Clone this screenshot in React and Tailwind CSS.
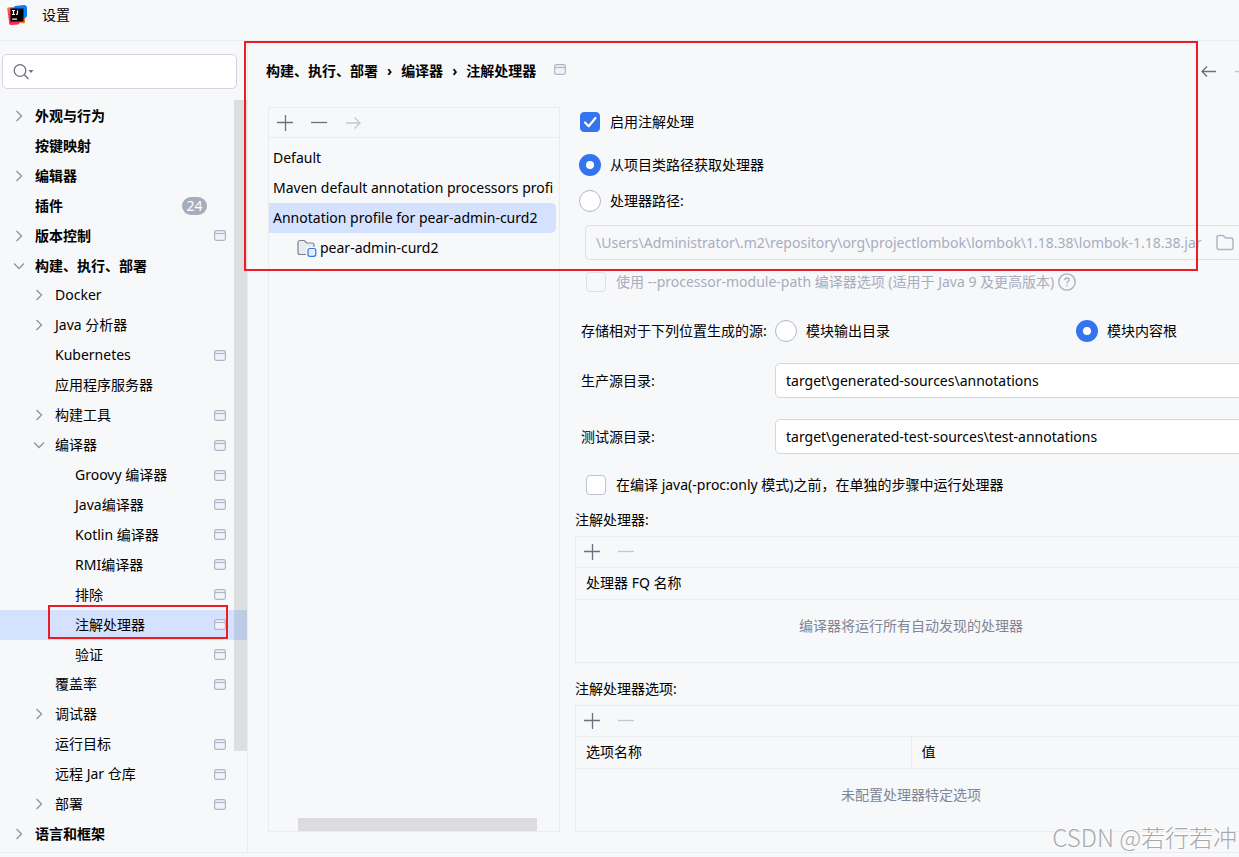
import React, { useState } from "react";

const TREE = [
  { label: "外观与行为", level: 0, arrow: "right" },
  { label: "按键映射", level: 0 },
  { label: "编辑器", level: 0, arrow: "right" },
  { label: "插件", level: 0, badge: 24 },
  { label: "版本控制", level: 0, arrow: "right", project: true },
  { label: "构建、执行、部署", level: 0, arrow: "down" },
  { label: "Docker", level: 1, arrow: "right" },
  { label: "Java 分析器", level: 1, arrow: "right" },
  { label: "Kubernetes", level: 1, project: true },
  { label: "应用程序服务器", level: 1 },
  { label: "构建工具", level: 1, arrow: "right", project: true },
  { label: "编译器", level: 1, arrow: "down", project: true },
  { label: "Groovy 编译器", level: 2, project: true },
  { label: "Java编译器", level: 2, project: true },
  { label: "Kotlin 编译器", level: 2, project: true },
  { label: "RMI编译器", level: 2, project: true },
  { label: "排除", level: 2, project: true },
  { label: "注解处理器", level: 2, project: true },
  { label: "验证", level: 2, project: true },
  { label: "覆盖率", level: 1, project: true },
  { label: "调试器", level: 1, arrow: "right" },
  { label: "运行目标", level: 1, project: true },
  { label: "远程 Jar 仓库", level: 1, project: true },
  { label: "部署", level: 1, arrow: "right", project: true },
  { label: "语言和框架", level: 0, arrow: "right" },
];

const INDENT = ["pl-3", "pl-8", "pl-13"];

const PROFILES = ["Default", "Maven default annotation processors profi", "Annotation profile for pear-admin-curd2"];

function Logo() {
  return (
    <svg width="20" height="20" viewBox="0 0 20 20" aria-hidden="true">
      <defs>
        <linearGradient id="warm" x1="0" y1="0" x2="0.4" y2="1">
          <stop offset="0" stopColor="#ff8a1f" />
          <stop offset="0.5" stopColor="#fb3a5c" />
          <stop offset="1" stopColor="#fe2857" />
        </linearGradient>
      </defs>
      <path d="M1 2.500 6 2v16.500l-2.300.500c-.8 0-1.400-.5-1.500-1.300L.2 4C.1 3.200.4 2.500 1 2.500Z" fill="url(#warm)" />
      <path d="M8 1 17 0c1.600 0 3 1.300 3 3v8l-3 4H6V3Z" fill="#087cfa" />
      <path d="M13 13h5v4c0 1-.6 1.600-1.500 1.500L11 17Z" fill="#fe7a1b" />
      <path d="M2 16h13l-4 3.500-7 .5c-1 0-1.600-.6-1.700-1.500Z" fill="#fe2857" />
      <path d="M3.500 3.500h13v13h-13z" fill="#000" />
      <path d="M5 5.500h3M6.500 5.500v4M5 9.500h3M10.500 5.500v3c0 .8-.5 1-1.500 1M5.200 14.200h4.800" stroke="#fff" strokeWidth="1.200" fill="none" />
    </svg>
  );
}

function Chevron({ dir }) {
  return (
    <svg width="14" height="14" viewBox="0 0 14 14" fill="none" stroke="#8d92a3" strokeWidth="1.300" aria-hidden="true">
      {dir === "down" ? <path d="m2 4.500 5 5 5-5" /> : <path d="m4.500 2 5 5-5 5" />}
    </svg>
  );
}

function ProjectIcon() {
  return (
    <svg width="12" height="11" viewBox="0 0 12 11" className="shrink-0" aria-hidden="true">
      <rect x="0.600" y="0.600" width="10.800" height="9.800" rx="1.800" fill="#f2f3f9" stroke="#b1b5c6" strokeWidth="1.200" />
      <path d="M1 3.500h10" stroke="#b1b5c6" strokeWidth="1.200" />
    </svg>
  );
}

function IconButton({ label, disabled, children }) {
  return (
    <button
      type="button"
      aria-label={label}
      disabled={disabled}
      className="flex size-[18px] items-center justify-center text-[#6c707e] disabled:text-[#c4c6cd]"
    >
      <svg width="18" height="18" viewBox="0 0 18 18" fill="none" stroke="currentColor" strokeWidth="1.300">
        {children}
      </svg>
    </button>
  );
}

function Plus({ label }) {
  return (
    <IconButton label={label}>
      <path d="M9.500 1v16M1 8.500h16" />
    </IconButton>
  );
}

function Minus({ label, disabled }) {
  return (
    <IconButton label={label} disabled={disabled}>
      <path d="M1 8.500h16" />
    </IconButton>
  );
}

function FolderPath() {
  return <path d="M1 3.500C1 2.400 1.900 1.500 3 1.500h3.500c.5 0 .9.200 1.200.500l2 2H15c1.100 0 2 .9 2 2v7.500c0 1.100-.9 2-2 2H3c-1.100 0-2-.9-2-2Z" />;
}

function Check({ label, className = "", ...props }) {
  return (
    <label className={`flex h-5 items-center gap-[10px] whitespace-nowrap has-disabled:text-[#a8adbd] ${className}`}>
      <span className="grid size-5 shrink-0">
        <input
          type="checkbox"
          className="peer col-start-1 row-start-1 size-5 appearance-none rounded-[4px] border border-[#bfc2d0] bg-white checked:border-[#3574f0] checked:bg-[#3574f0] disabled:border-[#dfe1e5] disabled:bg-transparent"
          {...props}
        />
        <svg viewBox="0 0 20 20" fill="none" stroke="#fff" strokeWidth="2.200" strokeLinecap="round" strokeLinejoin="round" className="pointer-events-none col-start-1 row-start-1 hidden size-5 peer-checked:block">
          <path d="m5 10.500 3.700 3.700L15.500 6" />
        </svg>
      </span>
      {label}
    </label>
  );
}

function Radio({ label, ...props }) {
  return (
    <label className="flex h-[22px] items-center gap-[9px] whitespace-nowrap">
      <input
        type="radio"
        className="size-[22px] shrink-0 appearance-none rounded-full border border-[#b4b8c8] bg-white checked:border-[7px] checked:border-[#3574f0]"
        {...props}
      />
      {label}
    </label>
  );
}

function Sidebar({ selected, onSelect }) {
  return (
    <aside className="relative flex w-[248px] shrink-0 flex-col border-r border-[#ebecf0] pb-[3px]">
      <div className="mt-[13px] mr-[10px] ml-[2px] flex h-[35px] shrink-0 items-center rounded-[5px] border border-[#d3d5de] bg-white px-[10px]">
        <svg width="22" height="18" viewBox="0 0 22 18" fill="none" stroke="#6c707e" strokeWidth="1.300" aria-hidden="true">
          <circle cx="7" cy="7.500" r="5.800" />
          <path d="m11.200 11.700 4.300 4.300" />
          <path d="M15.500 7h5l-2.500 3Z" fill="#6c707e" stroke="none" />
        </svg>
        <input type="search" aria-label="搜索设置" className="min-w-0 flex-1 bg-transparent outline-none" />
      </div>
      <ul className="mt-3 flex min-h-0 flex-1 flex-col">
        {TREE.map((item) => (
          <li key={item.label} className="flex flex-1">
            <button
              type="button"
              onClick={() => onSelect(item.label)}
              className={`flex w-full items-center pr-[21px] text-left ${INDENT[item.level]} ${item.level === 0 ? "font-bold" : ""} ${selected === item.label ? "bg-[#d4e2ff]" : ""}`}
            >
              <span className="w-[23px] shrink-0">{item.arrow && <Chevron dir={item.arrow} />}</span>
              <span className="flex-1 whitespace-nowrap">{item.label}</span>
              {item.badge && (
                <span className="mr-[19px] flex h-[18px] w-[25px] items-center justify-center rounded-full bg-[#a8adbd] font-normal text-white">
                  {item.badge}
                </span>
              )}
              {item.project && <ProjectIcon />}
            </button>
          </li>
        ))}
      </ul>
      <div className="absolute top-[59px] right-0 h-[651px] w-[13px] bg-black/10" />
    </aside>
  );
}

function Profiles() {
  const [active, setActive] = useState(PROFILES[2]);

  return (
    <section className="relative flex w-[292px] shrink-0 flex-col overflow-hidden border border-[#ebecf0]">
      <div className="flex h-[30px] shrink-0 items-center gap-4 border-b border-[#ebecf0] px-[7px]">
        <Plus label="添加配置文件" />
        <Minus label="移除配置文件" />
        <IconButton label="移至" disabled>
          <path d="M2 9h14M10.500 3.500 16 9l-5.500 5.500" />
        </IconButton>
      </div>
      <ul className="pt-[5px]">
        {PROFILES.map((name) => (
          <li key={name}>
            <button
              type="button"
              onClick={() => setActive(name)}
              className={`flex h-[30px] items-center rounded-r-[5px] pl-1 text-left whitespace-nowrap ${active === name ? "w-[287px] bg-[#d4e2ff]" : ""}`}
            >
              {name}
            </button>
          </li>
        ))}
        <li>
          <button type="button" className="flex h-[30px] items-center gap-[3px] pl-7">
            <svg width="20" height="18" viewBox="0 0 20 18" fill="#ebecf0" stroke="#7d818f" strokeWidth="1.200" aria-hidden="true">
              <FolderPath />
              <rect x="9" y="8" width="11" height="10" fill="#f7f8fa" stroke="none" />
              <rect x="11" y="9.500" width="7.800" height="7.800" rx="2" fill="#e7effd" stroke="#3574f0" />
            </svg>
            pear-admin-curd2
          </button>
        </li>
      </ul>
      <div className="absolute bottom-0 left-[29px] h-[13px] w-[239px] bg-[#dcdcde]" />
    </section>
  );
}

function GridPanel({ title, columns, empty }) {
  return (
    <section>
      <h2 className="leading-5">{title}</h2>
      <div className="mt-[6px] border border-[#ebecf0]">
        <div className="flex h-[31px] items-center gap-4 border-b border-[#ebecf0] px-[7px]">
          <Plus label="添加" />
          <Minus label="移除" disabled />
        </div>
        <table className="w-full table-fixed border-collapse">
          <thead>
            <tr className="h-[31px] border-b border-[#ebecf0]">
              {columns.map((name) => (
                <th key={name} scope="col" className="border-l border-[#ebecf0] px-[10px] text-left font-normal first:border-l-0">
                  {name}
                </th>
              ))}
            </tr>
          </thead>
          <tbody>
            <tr>
              <td colSpan={columns.length} className="h-[63px] pb-[10px] text-center text-[#818594]">
                {empty}
              </td>
            </tr>
          </tbody>
        </table>
      </div>
    </section>
  );
}

function ProcessorForm() {
  const [source, setSource] = useState("classpath");
  const [output, setOutput] = useState("content");

  return (
    <form className="-mr-2 min-w-0 flex-1 pt-[5px] pl-[15px]" onSubmit={(e) => e.preventDefault()}>
      <Check label="启用注解处理" defaultChecked className="ml-[5px]" />
      <div className="mt-[22px] ml-1 flex flex-col gap-[14px]">
        <Radio label="从项目类路径获取处理器" name="source" checked={source === "classpath"} onChange={() => setSource("classpath")} />
        <Radio label="处理器路径:" name="source" checked={source === "path"} onChange={() => setSource("path")} />
      </div>
      <div className="mt-[13px] ml-[10px] flex h-[35px] items-center rounded-l-[5px] border border-r-0 border-[#dfe1e5] pr-[13px] pl-[10px]">
        <input
          aria-label="处理器路径"
          disabled
          className="min-w-0 flex-1 text-[#a8adbd]"
          defaultValue="\Users\Administrator\.m2\repository\org\projectlombok\lombok\1.18.38\lombok-1.18.38.jar"
        />
        <button type="button" aria-label="浏览" className="ml-1">
          <svg width="18" height="17" viewBox="0 0 18 17" fill="none" stroke="#b1b5c6" strokeWidth="1.500">
            <FolderPath />
          </svg>
        </button>
      </div>
      <div className="mt-3 ml-[11px] flex items-center gap-1">
        <Check label="使用 --processor-module-path 编译器选项 (适用于 Java 9 及更高版本)" disabled />
        <button type="button" aria-label="帮助">
          <svg width="18" height="18" viewBox="0 0 18 18" fill="none" stroke="#a8adbd" strokeWidth="1.300">
            <circle cx="9" cy="9" r="8.200" />
            <path d="M6.800 7.200c0-1.300 1-2.200 2.200-2.200s2.200.8 2.200 2c0 1.500-2.200 1.700-2.200 3.400M9 11.800v1.400" />
          </svg>
        </button>
      </div>
      <fieldset className="mt-[28px] ml-[6px] flex items-center">
        <legend className="float-left w-[194px] whitespace-nowrap">存储相对于下列位置生成的源:</legend>
        <div className="grid flex-1 grid-cols-[301px_1fr]">
          <Radio label="模块输出目录" name="output" checked={output === "output"} onChange={() => setOutput("output")} />
          <Radio label="模块内容根" name="output" checked={output === "content"} onChange={() => setOutput("content")} />
        </div>
      </fieldset>
      <div className="mt-[21px] ml-[6px] grid grid-cols-[194px_1fr] items-center gap-y-[21px]">
        <label htmlFor="main-dir">生产源目录:</label>
        <input id="main-dir" className="h-[35px] min-w-0 rounded-l-[5px] border border-[#d3d5de] bg-white px-[10px]" defaultValue="target\generated-sources\annotations" />
        <label htmlFor="test-dir">测试源目录:</label>
        <input id="test-dir" className="h-[35px] min-w-0 rounded-l-[5px] border border-[#d3d5de] bg-white px-[10px]" defaultValue="target\generated-test-sources\test-annotations" />
      </div>
      <Check label="在编译 java(-proc:only 模式)之前，在单独的步骤中运行处理器" className="mt-[21px] ml-[11px]" />
      <div className="mt-[15px] flex flex-col gap-4">
        <GridPanel title="注解处理器:" columns={["处理器 FQ 名称"]} empty="编译器将运行所有自动发现的处理器" />
        <GridPanel title="注解处理器选项:" columns={["选项名称", "值"]} empty="未配置处理器特定选项" />
      </div>
    </form>
  );
}

export default function App() {
  const [selected, setSelected] = useState("注解处理器");

  return (
    <div className="relative flex h-screen flex-col overflow-hidden bg-[#f7f8fa] font-['Noto_Sans','Noto_Sans_CJK_SC',sans-serif] text-[14px] leading-5 text-black">
      <header className="flex h-[41px] shrink-0 items-start gap-[15px] border-b border-[#ebecf0] px-[7px] pt-[5px]">
        <Logo />
        <h1>设置</h1>
      </header>

      <div className="flex min-h-0 flex-1">
        <Sidebar selected={selected} onSelect={setSelected} />
        <main className="flex min-w-0 flex-1 flex-col">
          <div className="flex h-[60px] shrink-0 items-center pl-[18px]">
            <nav className="flex items-center gap-[9px] font-bold whitespace-nowrap">
              <a href="#build">构建、执行、部署</a>
              <span>›</span>
              <a href="#compiler">编译器</a>
              <span>›</span>
              <a href="#processors">注解处理器</a>
            </nav>
            <span className="ml-[18px] pb-1">
              <ProjectIcon />
            </span>
            <div className="-mr-[13px] ml-auto flex gap-4">
              <IconButton label="后退">
                <path d="M16 9.500H2M7 4.500l-5 5 5 5" />
              </IconButton>
              <IconButton label="前进" disabled>
                <path d="M1 9.500h14M10 4.500l5 5-5 5" />
              </IconButton>
            </div>
          </div>
          <div className="flex min-h-0 flex-1 pt-[6px] pb-5 pl-5">
            <Profiles />
            <ProcessorForm />
          </div>
        </main>
      </div>

      <footer className="h-[5px] shrink-0 border-t border-[#ebecf0]" />

      {/* highlight frames and watermark */}
      <div className="pointer-events-none absolute top-[41px] left-[244px] h-[230px] w-[954px] border-2 border-[#ed1c24]" />
      <div className="pointer-events-none absolute top-[605px] left-[48px] h-[34px] w-[180px] border-2 border-[#ed1c24]" />
      <div className="pointer-events-none absolute right-[2px] bottom-1 font-['Noto_Sans_CJK_SC',sans-serif] text-[24px] leading-8 font-light whitespace-nowrap text-[#a9a9ab] [text-shadow:-1px_-1px_0_#fff]">
        CSDN @若行若冲
      </div>
    </div>
  );
}
